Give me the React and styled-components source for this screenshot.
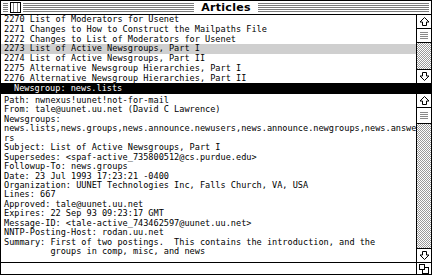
import styled, { createGlobalStyle } from "styled-components";

const MONO = `"DejaVu Sans Mono", "Liberation Mono", monospace`;

const articles = [
  "2270 List of Moderators for Usenet",
  "2271 Changes to How to Construct the Mailpaths File",
  "2272 Changes to List of Moderators for Usenet",
  "2273 List of Active Newsgroups, Part I",
  "2274 List of Active Newsgroups, Part II",
  "2275 Alternative Newsgroup Hierarchies, Part I",
  "2276 Alternative Newsgroup Hierarchies, Part II",
];

const headers = [
  "Path: nwnexus!uunet!not-for-mail",
  "From: tale@uunet.uu.net (David C Lawrence)",
  "Newsgroups:",
  "news.lists,news.groups,news.announce.newusers,news.announce.newgroups,news.answe",
  "rs",
  "Subject: List of Active Newsgroups, Part I",
  "Supersedes: <spaf-active_735800512@cs.purdue.edu>",
  "Followup-To: news.groups",
  "Date: 23 Jul 1993 17:23:21 -0400",
  "Organization: UUNET Technologies Inc, Falls Church, VA, USA",
  "Lines: 667",
  "Approved: tale@uunet.uu.net",
  "Expires: 22 Sep 93 09:23:17 GMT",
  "Message-ID: <tale-active_743462597@uunet.uu.net>",
  "NNTP-Posting-Host: rodan.uu.net",
  "Summary: First of two postings.  This contains the introduction, and the",
  "         groups in comp, misc, and news",
];

const GlobalStyle = createGlobalStyle`
  html, body { margin: 0; padding: 0; background: #fff; }
  body { width: 432px; height: 275px; overflow: hidden; }
`;

const Window = styled.div`
  box-sizing: border-box;
  width: 432px;
  height: 275px;
  border: 1px solid #000;
  display: flex;
  flex-direction: column;
  background: #fff;
  font-family: ${MONO};
  font-size: 8.57px;
  color: #000;
`;

const TitleBar = styled.div`
  height: 13px;
  border-bottom: 1px solid #000;
  display: flex;
  align-items: center;
  padding: 0 2px;
  gap: 2px;
`;

const Stripes = styled.div`
  height: 9px;
  flex: ${(p) => (p.$fixed ? `0 0 ${p.$fixed}px` : 1)};
  background: repeating-linear-gradient(#7a7a7a 0 1px, #fff 1px 2px);
`;

const CloseBox = styled.div`
  box-sizing: border-box;
  width: 11px;
  height: 11px;
  border: 1px solid #000;
  background: #fff;
  display: flex;
  justify-content: center;
  align-items: center;
  &::after {
    content: "";
    width: 3px;
    height: 9px;
    border-left: 1px solid #888;
    border-right: 1px solid #888;
  }
`;

const Title = styled.div`
  font-family: "DejaVu Sans", "Liberation Sans", sans-serif;
  font-weight: bold;
  font-size: 11px;
  line-height: 13px;
  padding: 0 5px;
  letter-spacing: 0.3px;
`;

const Pane = styled.div`
  display: flex;
  height: ${(p) => p.$h}px;
`;

const ListBody = styled.div`
  flex: 1;
  overflow: hidden;
`;

const Row = styled.div`
  height: 9.8px;
  line-height: 9.8px;
  padding-left: 3px;
  white-space: pre;
  background: ${(p) => (p.$selected ? "#cfcfcf" : "transparent")};
`;

const GroupBar = styled.div`
  height: 11px;
  line-height: 11px;
  background: #000;
  color: #fff;
  padding-left: 13px;
  white-space: pre;
`;

const ArticleBody = styled.div`
  flex: 1;
  overflow: hidden;
  padding-top: 2px;
`;

const Line = styled.div`
  height: 9.45px;
  line-height: 9.45px;
  padding-left: 3px;
  white-space: pre;
`;

const Scrollbar = styled.div`
  width: 14px;
  border-left: 1px solid #000;
  display: flex;
  flex-direction: column;
`;

const ArrowBox = styled.div`
  height: 13px;
  display: flex;
  align-items: center;
  justify-content: center;
  border-${(p) => (p.$down ? "top" : "bottom")}: 1px solid #000;
`;

const Thumb = styled.div`
  height: ${(p) => p.$h}px;
  border-bottom: 1px solid #000;
  display: flex;
  justify-content: center;
  align-items: center;
  background: #fff;
  &::after {
    content: "";
    width: 8px;
    height: 7px;
    background: repeating-linear-gradient(#8a8a8a 0 1px, #fff 1px 2px);
  }
`;

const Track = styled.div`
  flex: 1;
  background: repeating-conic-gradient(#9a9a9a 0 25%, #fff 0 50%) 0 0 / 2px 2px;
`;

const BottomRow = styled.div`
  height: 11px;
  border-top: 1px solid #000;
  display: flex;
`;

const GrowBox = styled.div`
  width: 14px;
  border-left: 1px solid #000;
  display: flex;
  align-items: center;
  justify-content: center;
`;

function Arrow({ down }) {
  return (
    <svg width="11" height="11" viewBox="0 0 11 11" style={down ? { transform: "rotate(180deg)" } : null}>
      <path d="M5.5 1.5 L10 6 H7.5 V9.5 H3.5 V6 H1 Z" fill="#fff" stroke="#000" strokeWidth="1" />
    </svg>
  );
}

function Grow() {
  return (
    <svg width="10" height="10" viewBox="0 0 10 10">
      <rect x="3.5" y="3.5" width="6" height="6" fill="#fff" stroke="#000" />
      <rect x="0.5" y="0.5" width="5" height="5" fill="#fff" stroke="#000" />
    </svg>
  );
}

function Bar({ thumb }) {
  return (
    <Scrollbar>
      <ArrowBox><Arrow /></ArrowBox>
      <Thumb $h={thumb} />
      <Track />
      <ArrowBox $down><Arrow down /></ArrowBox>
    </Scrollbar>
  );
}

export default function App() {
  return (
    <>
      <GlobalStyle />
      <Window>
        <TitleBar>
          <Stripes $fixed={5} />
          <CloseBox />
          <Stripes />
          <Title>Articles</Title>
          <Stripes />
        </TitleBar>
        <Pane $h={68}>
          <ListBody>
            {articles.map((a, i) => (
              <Row key={a} $selected={i === 3}>{a}</Row>
            ))}
          </ListBody>
          <Bar thumb={13} />
        </Pane>
        <GroupBar>Newsgroup: news.lists</GroupBar>
        <Pane $h={168}>
          <ArticleBody>
            {headers.map((h, i) => (
              <Line key={i}>{h}</Line>
            ))}
          </ArticleBody>
          <Bar thumb={15} />
        </Pane>
        <BottomRow>
          <ListBody />
          <GrowBox><Grow /></GrowBox>
        </BottomRow>
      </Window>
    </>
  );
}
